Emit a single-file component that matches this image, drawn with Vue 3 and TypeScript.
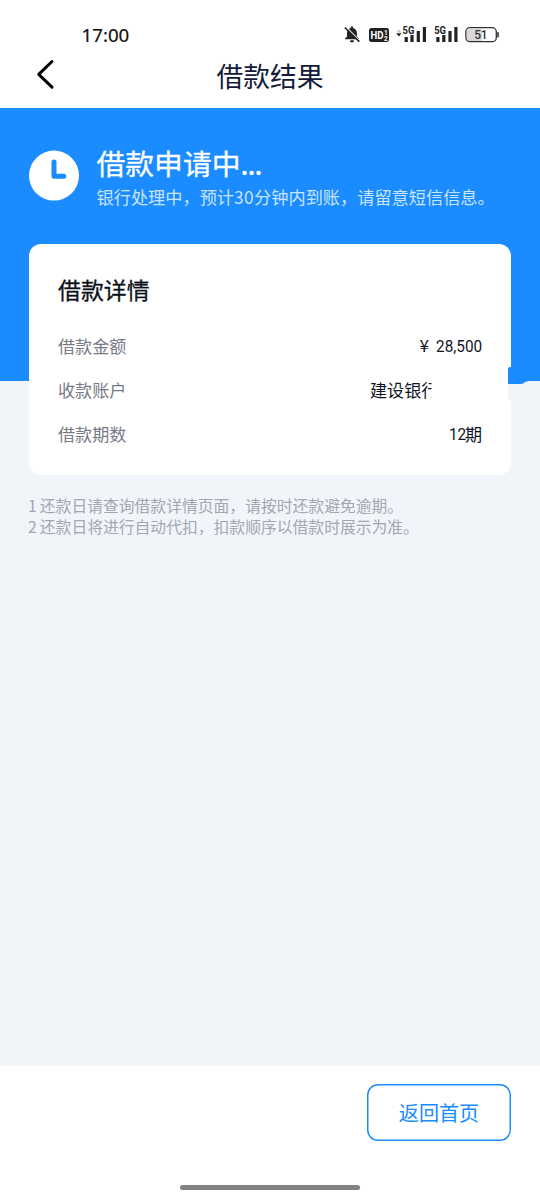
<script setup lang="ts">
interface DetailRow {
  label: string
  digits: string
  unit: string
  kind: 'amount' | 'bank' | 'term'
}

const rows: DetailRow[] = [
  { label: '借款金额', digits: '28,500', unit: '', kind: 'amount' },
  { label: '收款账户', digits: '', unit: '建设银行', kind: 'bank' },
  { label: '借款期数', digits: '12', unit: '期', kind: 'term' },
]

const notes: { no: string; text: string }[] = [
  { no: '1', text: '还款日请查询借款详情页面，请按时还款避免逾期。' },
  { no: '2', text: '还款日将进行自动代扣，扣款顺序以借款时展示为准。' },
]
</script>

<template>
  <div class="screen">
    <div class="status">
      <span class="time">17:00</span>
      <svg class="indicators" width="160" height="24" viewBox="340 22 160 24">
        <g fill="#222">
          <path d="M345.2 39.200v-1l1.800-1.700V33c0-2.800 1.800-4.600 3.800-5.100v-1.300h2.200v1.300c2.300.6 3.900 2.400 3.900 5.100v3.500l1.700 1.700v1z" />
          <rect x="350" y="40.300" width="4" height="2" rx="1" />
          <path d="M345.600 26.700l14.500 14.500" stroke="#fff" stroke-width="1.500" />
          <path d="M344.800 27.500l14.500 14.200" stroke="#222" stroke-width="1.700" />
          <rect x="369" y="28" width="20" height="14" rx="2.500" />
          <path d="M396.300 32.400l2.600-3.100 2.600 3.100z" fill="#ccc" />
          <path d="M396.300 33.200h5.200l-2.600 3.200z" />
          <rect x="404.600" y="37" width="3.200" height="5" />
          <rect x="410.400" y="35" width="3.200" height="7" />
          <rect x="416.700" y="31" width="3.200" height="11" />
          <rect x="422.800" y="27" width="3.200" height="15" />
          <rect x="436.300" y="37" width="3.200" height="5" />
          <rect x="442.200" y="35" width="3.200" height="7" />
          <rect x="448.400" y="31" width="3.200" height="11" />
          <rect x="454.300" y="27" width="3.200" height="15" />
        </g>
        <g class="tiny">
          <text x="370.500" y="39" font-size="11" class="light" textLength="13" lengthAdjust="spacingAndGlyphs">HD</text>
          <text x="384" y="34.800" font-size="6.500" class="light">1</text>
          <text x="384" y="40.600" font-size="6.500" class="light">2</text>
          <text class="halo" x="402.600" y="34.200" font-size="10.800" textLength="11.800" lengthAdjust="spacingAndGlyphs">5G</text>
          <text class="halo" x="434.200" y="34.200" font-size="10.800" textLength="11.800" lengthAdjust="spacingAndGlyphs">5G</text>
        </g>
        <path d="M470 29h12v12.500h-12a3 3 0 0 1-3-3V32a3 3 0 0 1 3-3z" fill="#d8d8d8" />
        <rect x="465.900" y="27.700" width="30.400" height="14" rx="4" fill="none" stroke="#333" stroke-width="1.300" />
        <rect x="497.200" y="32" width="1.600" height="5.500" rx=".8" fill="#333" />
        <text class="level" x="474.300" y="39" font-size="12" textLength="13.400">51</text>
      </svg>
    </div>

    <header class="nav">
      <svg class="back" width="22" height="32" viewBox="0 0 22 32">
        <path d="M18 3.500L4.700 16.300 18 29.100" fill="none" stroke="#000" stroke-width="3" stroke-linecap="round" stroke-linejoin="round" />
      </svg>
      <h1>借款结果</h1>
    </header>

    <main class="body">
      <section class="hero">
        <svg class="clock" width="50" height="51" viewBox="0 0 50 51">
          <circle cx="25" cy="25.600" r="25" fill="#fff" />
          <path d="M25 12v14.300h9.800" fill="none" stroke="#1a8cff" stroke-width="5" stroke-linecap="round" stroke-linejoin="round" />
        </svg>
        <div class="hero-text">
          <h2>借款申请中<span class="dots">...</span></h2>
          <p>银行处理中，预计<span class="num">30</span>分钟内到账，请留意短信信息。</p>
        </div>
      </section>

      <section class="card">
        <h3>借款详情</h3>
        <div v-for="row in rows" :key="row.kind" class="row">
          <span class="label">{{ row.label }}</span>
          <span class="value" :class="row.kind"><i v-if="row.kind === 'amount'" class="yen">¥</i><span v-if="row.digits" class="digits">{{ row.digits }}</span>{{ row.unit }}</span>
        </div>
        <svg class="mask" width="111" height="42" viewBox="429 362 111 42">
          <path d="M431.500 383H508V401H429V398h2.500z" fill="#fff" />
          <path d="M508 382H511V401H508z" fill="#f1f5fa" />
          <path d="M508 368.500q0-1.500 2-1.500h1V380H528v1.300q-2.500 0-4 1.500-1 1.200-3 1.200H508z" fill="#1a8cff" />
        </svg>
      </section>

      <ol class="notes">
        <li v-for="note in notes" :key="note.no"><span class="no">{{ note.no }}</span>{{ note.text }}</li>
      </ol>
    </main>

    <footer class="footer">
      <button type="button">返回首页</button>
      <div class="home-bar"></div>
    </footer>
  </div>
</template>

<style>
html,
body {
  margin: 0;
  background: #fff;
}
</style>

<style scoped>
.screen {
  width: 540px;
  height: 1200px;
  display: flex;
  flex-direction: column;
  overflow: hidden;
  background: #fff;
  font-family: "Noto Sans CJK SC", sans-serif;
}
h1, h2, h3, p, ol {
  margin: 0;
  padding: 0;
  font-weight: 400;
  list-style: none;
  white-space: nowrap;
}
.status {
  height: 46px;
  display: flex;
  justify-content: space-between;
  padding: 0 40px 0 81.500px;
}
.time {
  font: 400 18.700px/24px "Noto Sans", sans-serif;
  color: #111;
  padding-top: 23px;
  -webkit-text-stroke: 0.2px #111;
}
.indicators {
  margin-top: 22px;
}
.tiny {
  font-family: Roboto, sans-serif;
  font-weight: 700;
  fill: #222;
}
.light {
  fill: #fff;
}
.halo {
  stroke: #fff;
  stroke-width: 2px;
  paint-order: stroke;
}
.level {
  font-family: Roboto, sans-serif;
  font-weight: 500;
  fill: #333;
}
.nav {
  height: 62px;
  display: grid;
  grid-template-columns: 60px 1fr 60px;
}
.back {
  margin: 12px 0 0 34px;
}
h1 {
  font-size: 26.800px;
  line-height: 40px;
  margin-top: 10px;
  text-align: center;
  color: #141b38;
}
.body {
  flex: 1;
  background: linear-gradient(#1a8cff 273.500px, #f1f5fa 273.500px);
}
.hero {
  height: 136px;
  display: flex;
  gap: 17.500px;
  padding-left: 29px;
  color: #fff;
}
.clock {
  margin-top: 42px;
}
.hero-text {
  padding-top: 35px;
}
h2 {
  font-size: 28.800px;
  line-height: 40px;
  -webkit-text-stroke: 0.3px #fff;
}
.dots {
  letter-spacing: -1px;
}
.hero p {
  font-size: 17.200px;
  line-height: 28px;
  color: #cbe4ff;
}
.num {
  letter-spacing: 0.500px;
}
.card {
  position: relative;
  box-sizing: border-box;
  width: 482px;
  height: 230.500px;
  margin-left: 29px;
  padding: 25px 29px 0;
  background: #fff;
  border-radius: 12px;
}
h3 {
  font-size: 22.900px;
  line-height: 40px;
  margin-bottom: 14px;
  color: #0c1118;
  -webkit-text-stroke: 0.3px #0c1118;
}
.row {
  height: 44px;
  display: flex;
  align-items: center;
  justify-content: space-between;
  font-size: 17.100px;
}
.label {
  color: #777b87;
}
.value {
  display: flex;
  align-items: baseline;
  white-space: nowrap;
  color: #10151f;
}
.digits {
  font-family: Roboto, sans-serif;
  font-size: 17px;
  transform: translateY(-1px) scaleX(0.9);
  transform-origin: right;
}
.term .digits {
  transform: translate(1px, -1px) scaleX(0.9);
}
.yen {
  font-style: normal;
  margin-right: 2px;
  transform: translateY(-1px);
}
.bank {
  margin-right: 43.600px;
}
.mask {
  position: absolute;
  left: 400px;
  top: 118px;
}
.notes {
  padding: 20px 0 0 28px;
  font-size: 15.800px;
  line-height: 21.500px;
  color: #a3a7b0;
}
.no {
  margin-right: 3px;
}
.footer {
  height: 134px;
  display: flex;
  flex-direction: column;
  align-items: center;
  background: #fff;
}
button {
  box-sizing: border-box;
  width: 144px;
  height: 57px;
  margin: 18px 29px 0 auto;
  padding: 0;
  border: 0;
  box-shadow: inset 0 0 0 1.500px #1a8cff;
  border-radius: 11px;
  background: #fff;
  color: #1a8cff;
  font: 20.100px/40px "Noto Sans CJK SC", sans-serif;
}
.home-bar {
  width: 180px;
  height: 4.500px;
  margin-top: 44px;
  border-radius: 3px;
  background: #828282;
}
</style>
